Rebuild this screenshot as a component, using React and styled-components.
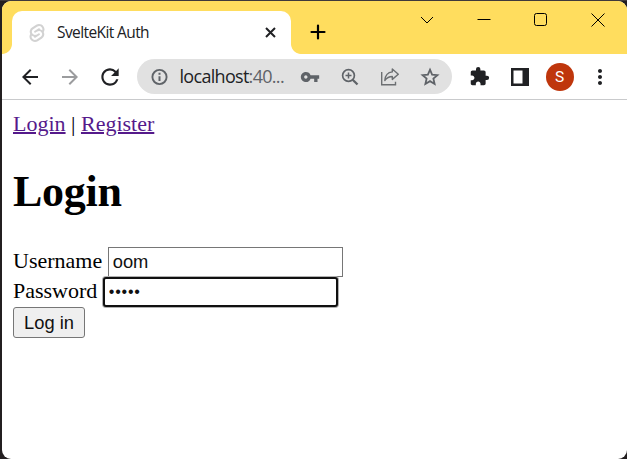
import React from "react";
import styled, { createGlobalStyle, css } from "styled-components";
import {
  MdArrowBack,
  MdArrowForward,
  MdRefresh,
  MdVpnKey,
  MdExtension,
  MdMoreVert,
} from "react-icons/md";
import { SiSvelte } from "react-icons/si";

const GlobalStyle = createGlobalStyle`
  * { box-sizing: border-box; }
  body { margin: 0; background: #231f20; overflow: hidden; }
  svg { display: block; flex: none; }
`;

const Desktop = styled.div`
  height: 459px;
  padding: 1px 0 0 2px;
  background: linear-gradient(#403a3b 0, #403a3b 1px, #231f20 1px);
`;

const Window = styled.div`
  height: 458px;
  border-radius: 9px;
  overflow: hidden;
  background: #fff;
  display: flex;
  flex-direction: column;
`;

const TitleBar = styled.div`
  height: 53px;
  background: #ffdd5e;
  display: flex;
  align-items: flex-start;
`;

const TabFoot = styled.div`
  align-self: flex-end;
  width: 10px;
  height: 10px;
  background: radial-gradient(
    circle at ${(p) => (p.$side === "left" ? "0 0" : "100% 0")},
    #ffdd5e 9.5px,
    #fff 10.3px
  );
`;

const Tab = styled.div`
  width: 279px;
  height: 43px;
  margin-top: 10px;
  padding: 0 12px 0 16px;
  border-radius: 10px 10px 0 0;
  background: #fff;
  display: flex;
  align-items: center;
  color: #202124;
`;

const TabTitle = styled.span`
  flex: 1;
  margin: -1px 0 0 11px;
  font: 15.5px/20px "Open Sans", sans-serif;
  letter-spacing: -0.6px;
  white-space: nowrap;
`;

const NewTab = styled.div`
  margin: 23px 0 0 9px;
`;

const WindowControls = styled.div`
  margin: 0 1px 0 auto;
  display: flex;
`;

const Control = styled.div`
  width: 57px;
  height: 37px;
  display: flex;
  align-items: center;
  justify-content: center;
`;

const Toolbar = styled.div`
  height: 46px;
  padding: 0 0 0 7.5px;
  border-bottom: 1px solid #c9cacc;
  display: flex;
  align-items: center;
`;

const IconSlot = styled.div`
  width: 40px;
  height: 34px;
  display: flex;
  align-items: center;
  justify-content: center;
  color: ${(p) => p.$color || "#202124"};
`;

const AddressBar = styled.div`
  width: 315px;
  height: 35px;
  margin: 0 7.5px;
  padding: 0 2.5px 0 12px;
  border-radius: 18px;
  background: #e1e1e1;
  color: #5f6368;
  display: flex;
  align-items: center;
`;

const Url = styled.span`
  flex: 1;
  margin: -1px 0 0 10.5px;
  font: 18px/24px "Open Sans", sans-serif;
  letter-spacing: -0.7px;
  white-space: nowrap;
`;

const Host = styled.span`
  color: #202124;
`;

const Avatar = styled.div`
  width: 28px;
  height: 28px;
  border-radius: 50%;
  background: #bf360c;
  color: #fff;
  font: 15.5px/28px Roboto, sans-serif;
  text-align: center;
`;

const Page = styled.main`
  padding: 11px;
  color: #000;
  font: 22px/26px "Liberation Serif", serif;
`;

const Nav = styled.nav`
  height: 26px;
`;

const NavLink = styled.a`
  color: #551a8b;
  text-decoration: underline;
  text-decoration-thickness: 2px;
`;

const Title = styled.h1`
  margin: 29px 0 30px;
  font-size: 44px;
  line-height: 51px;
  font-weight: bold;
  letter-spacing: -0.25px;
`;

const Field = styled.label`
  display: flex;
  align-items: center;
  height: 30px;
  gap: 5.5px;
`;

const FieldName = styled.span`
  margin-top: -3px;
`;

const controlFont = css`
  font: 18.33px/21px "Liberation Sans", sans-serif;
  color: #111;
`;

const Input = styled.input`
  ${controlFont}
  width: 235px;
  height: 30px;
  margin: 0;
  padding: 1px 4px;
  border: 1px solid #767676;
  border-radius: 0;
  outline: none;
  background: #fff;
  ${(p) =>
    p.$focused &&
    css`
      border: 2px solid #101010;
      padding: 0 4px;
      border-radius: 3px;
      box-shadow: 0 0 0 1px #b0b0b0;
      font-size: 16px;
      letter-spacing: 0.75px;
    `}
`;

const Submit = styled.button`
  ${controlFont}
  display: block;
  width: 72px;
  height: 31px;
  padding: 0;
  border: 1px solid #767676;
  border-radius: 3px;
  background: #efefef;
`;

const Line = ({ size, width = 2, d, cap = "butt" }) => (
  <svg width={size} height={size} viewBox={`0 0 ${size} ${size}`} fill="none" stroke="currentColor" strokeWidth={width} strokeLinecap={cap}>
    <path d={d} />
  </svg>
);

export default function App() {
  return (
    <>
      <GlobalStyle />
      <Desktop>
        <Window>
          <TitleBar>
            <TabFoot $side="left" />
            <Tab>
              <SiSvelte size={18} color="#d2d2d2" />
              <TabTitle>SvelteKit Auth</TabTitle>
              <Line size={17} width={2} d="M4 4l9 9M13 4l-9 9" />
            </Tab>
            <TabFoot $side="right" />
            <NewTab>
              <Line size={16} width={2.2} d="M8 1.500v13M1.500 8h13" cap="round" />
            </NewTab>
            <WindowControls>
              <Control><Line size={16} width={1} d="M2 5l6 6 6-6" /></Control>
              <Control><Line size={14} width={1} d="M.5 6.500h13" /></Control>
              <Control>
                <svg width="14" height="14" viewBox="0 0 14 14" fill="none" stroke="currentColor">
                  <rect x=".5" y=".5" width="12" height="12" rx="2" />
                </svg>
              </Control>
              <Control><Line size={14} width={1} d="M.5.5l13 13M13.5.5l-13 13" /></Control>
            </WindowControls>
          </TitleBar>
          <Toolbar>
            <IconSlot><MdArrowBack size={24} /></IconSlot>
            <IconSlot $color="#9b9c9e"><MdArrowForward size={24} /></IconSlot>
            <IconSlot><MdRefresh size={26} /></IconSlot>
            <AddressBar>
              <svg width="20" height="20" viewBox="0 0 20 20" fill="none" stroke="currentColor" strokeWidth="2">
                <circle cx="10.500" cy="10" r="7.100" strokeWidth="1.900" />
                <path d="M10.500 9.200v4.800M10.500 5.800v2" />
              </svg>
              <Url><Host>localhost</Host>:40...</Url>
              <IconSlot $color="#5f6368"><MdVpnKey size={20} /></IconSlot>
              <IconSlot $color="#5f6368">
                <svg width="18" height="18" viewBox="0 0 18 18" fill="none" stroke="currentColor">
                  <circle cx="7.500" cy="7.500" r="5.900" strokeWidth="1.700" />
                  <path d="M11.700 11.700l4.800 4.800" strokeWidth="2.300" />
                  <path d="M7.500 4.500v6M4.500 7.500h6" strokeWidth="1.500" />
                </svg>
              </IconSlot>
              <IconSlot $color="#6c6f72">
                <svg width="20" height="20" viewBox="0 0 20 20" fill="none" stroke="currentColor" strokeWidth="1.4">
                  <path d="M1.7 5v12.7h13.8v-3" />
                  <path d="M12.3 2l6 5.2-6 5.2V9.5C8.800 9.500 6.800 10.800 4.800 13.500C5.200 8.500 8 5.300 12.300 4.900z" strokeLinejoin="round" />
                </svg>
              </IconSlot>
              <IconSlot $color="#5f6368">
                <svg width="20" height="20" viewBox="0 0 20 20" fill="none" stroke="currentColor" strokeWidth="1.800">
                  <path d="M10 2.700l2.100 5 5.300.450-4 3.500 1.200 5.300-4.600-2.800-4.600 2.800 1.200-5.300-4-3.500 5.300-.450z" />
                </svg>
              </IconSlot>
            </AddressBar>
            <IconSlot><MdExtension size={21} /></IconSlot>
            <IconSlot>
              <svg width="18" height="18" viewBox="0 0 18 18" fill="currentColor">
                <path fillRule="evenodd" d="M0 0h18v18H0zM2.500 2.500v13h9v-13z" />
              </svg>
            </IconSlot>
            <IconSlot><Avatar>S</Avatar></IconSlot>
            <IconSlot><MdMoreVert size={24} /></IconSlot>
          </Toolbar>
          <Page>
            <Nav><NavLink>Login</NavLink> | <NavLink>Register</NavLink></Nav>
            <Title>Login</Title>
            <Field><FieldName>Username</FieldName><Input defaultValue="oom" /></Field>
            <Field><FieldName>Password</FieldName><Input type="password" defaultValue="aaaaa" $focused /></Field>
            <Submit>Log in</Submit>
          </Page>
        </Window>
      </Desktop>
    </>
  );
}
